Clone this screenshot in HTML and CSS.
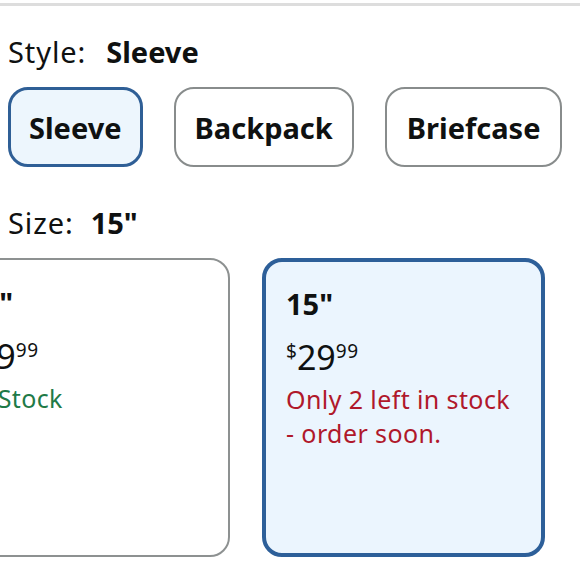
FILE: index.html
```html
<!DOCTYPE html>
<html>
<head>
<meta charset="utf-8">
<link rel="stylesheet" href="styles.css">
</head>
<body>
<div class="topline"></div>
<div class="section">
  <div class="label"><span class="label-name">Style:</span><span class="label-value">Sleeve</span></div>
  <div class="options">
    <button class="opt selected">Sleeve</button>
    <button class="opt">Backpack</button>
    <button class="opt wide">Briefcase</button>
  </div>
  <div class="label size-label"><span class="label-name">Size:</span><span class="label-value">15"</span></div>
</div>
<div class="cards-viewport">
  <div class="cards">
    <div class="card">
      <div class="card-title">13"</div>
      <div class="price"><span class="cur">$</span><span class="whole">19</span><span class="frac">99</span></div>
      <div class="stock in">In Stock</div>
    </div>
    <div class="card selected">
      <div class="card-title">15"</div>
      <div class="price"><span class="cur">$</span><span class="whole">29</span><span class="frac">99</span></div>
      <div class="stock low">Only 2 left in stock - order soon.</div>
    </div>
  </div>
</div>
</body>
</html>
```

FILE: styles.css
```css
* { box-sizing: border-box; }
html, body { margin: 0; padding: 0; background: #fff; }
body {
  font-family: "Noto Sans", "Open Sans", sans-serif;
  color: #0f1111;
  width: 580px;
  height: 580px;
  overflow: hidden;
}
.topline {
  margin-top: 3px;
  height: 3px;
  background: #dddddd;
}
.section { padding: 0 8px; }
.label {
  font-size: 29px;
  line-height: 38px;
  margin-top: 27px;
  display: flex;
  gap: 20px;
}
.label-name { letter-spacing: 0.9px; }
.label-value { font-weight: 700; }
.options {
  display: flex;
  gap: 31px;
  margin-top: 16px;
}
.opt {
  font-family: inherit;
  font-size: 29px;
  font-weight: 700;
  color: #0f1111;
  height: 80px;
  padding: 0 19px;
  background: #fff;
  border: 2px solid #888c8c;
  border-radius: 20px;
}
.opt.wide { padding: 0 20px; }
.opt.selected {
  background: #edf6fd;
  border: 3px solid #2f5f96;
  padding: 0 18px;
}
.size-label { margin-top: 37px; gap: 17px; }
.cards-viewport {
  overflow: hidden;
  margin-top: 16px;
}
.cards {
  display: flex;
  gap: 32px;
  margin-left: -53px;
}
.card {
  flex: 0 0 283px;
  height: 299px;
  border: 2px solid #8d9191;
  border-radius: 20px;
  padding: 25px 22px 25px 17px;
  background: #fff;
}
.card.selected {
  border: 4px solid #2d5f99;
  background: #ebf5fe;
  padding: 24px 20px 24px 20px;
}
.card-title {
  font-size: 29px;
  font-weight: 700;
  line-height: 36px;
}
.price {
  margin-top: 8px;
  line-height: 42px;
}
.cur { font-size: 19px; vertical-align: 12px; }
.whole { font-size: 34px; }
.frac { font-size: 19px; vertical-align: 12px; letter-spacing: 0.5px; }
.stock {
  font-size: 25px;
  line-height: 34px;
  letter-spacing: 0.4px;
  margin-top: -3px;
}
.stock.in { color: #1f7a47; }
.stock.low { color: #b0182b; }
```
